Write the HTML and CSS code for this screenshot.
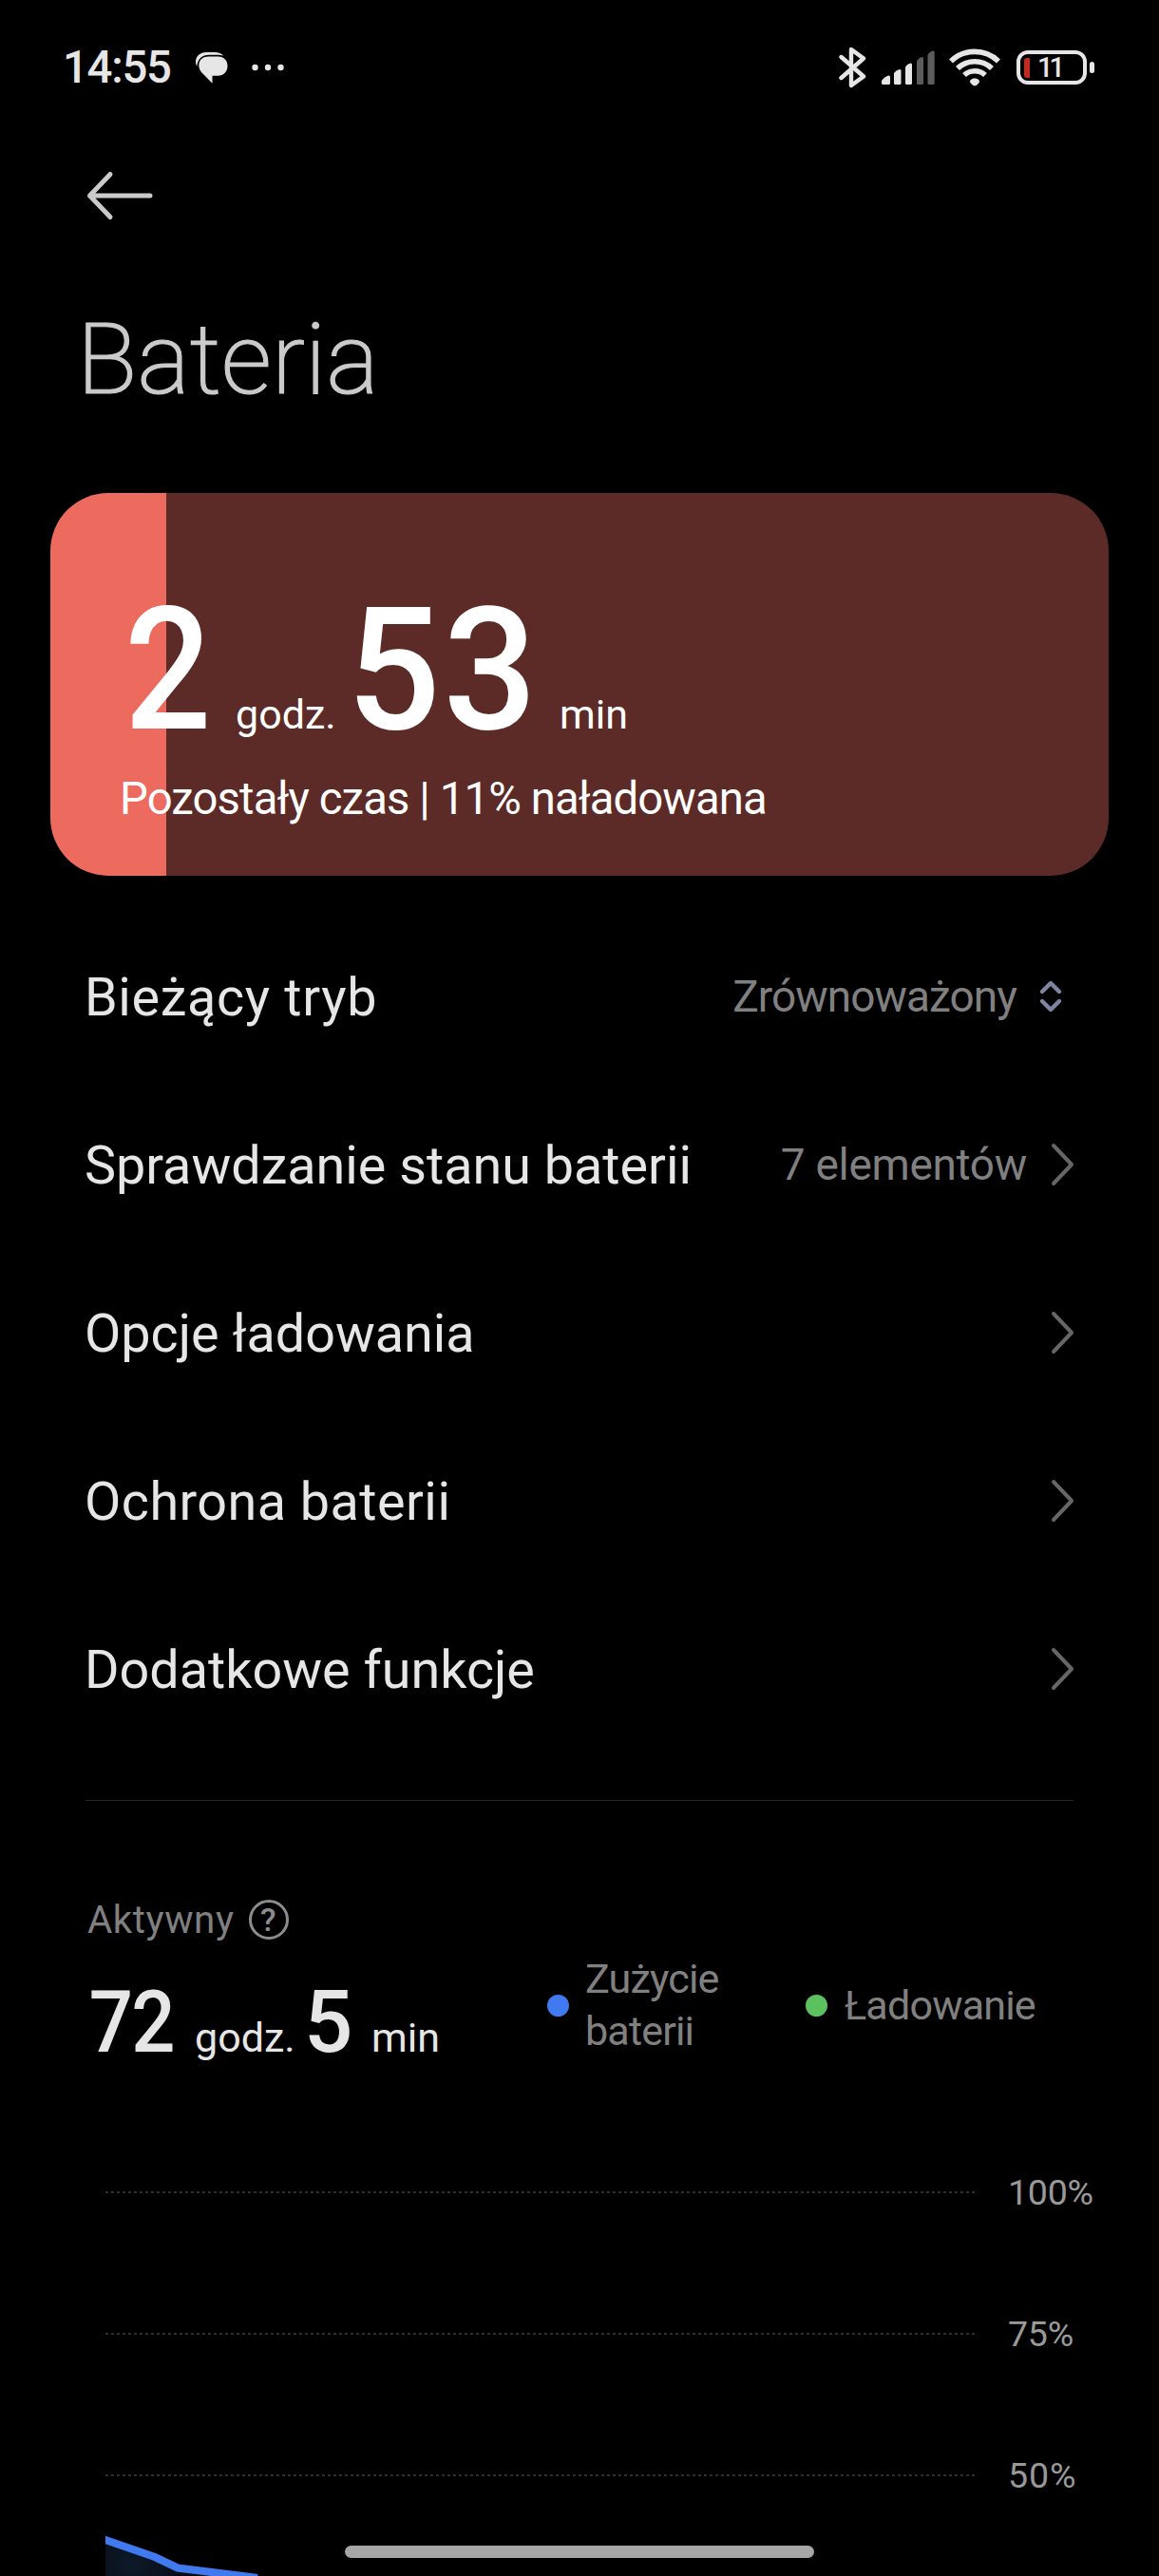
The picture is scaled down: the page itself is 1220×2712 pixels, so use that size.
FILE: index.html
```html
<!DOCTYPE html>
<html lang="pl">
<head>
  <meta charset="UTF-8">
  <meta name="viewport" content="width=device-width, initial-scale=1.0">
  <title>Bateria</title>
  <link rel="stylesheet" href="styles.css">
</head>
<body>
<div id="screen">
  <header class="status-bar">
    <div class="status-left">
      <span class="clock">14:55</span>
      <svg class="chat-icon" width="36" height="36" viewBox="0 0 36 36">
        <path d="M2.2 17C-1.5 9 4 2 12 2H21C25 2 28.5 3.6 30.3 5.8C28 5 26 4.8 23 4.8H15C8 4.8 3 9 2.2 17Z" fill="#e6e6e6"/>
        <path d="M18.5 34.7L8.5 24.6C1.5 18 3.5 6.6 14.5 6.6H24.5C31 6.6 34.5 11 34.5 16.5C34.5 22.5 30.5 26.7 24.5 26.7H18.5Z" fill="#e6e6e6"/>
      </svg>
      <svg class="more-icon" width="36" height="8" viewBox="0 0 36 8">
        <g fill="#e6e6e6"><circle cx="4.5" cy="4" r="3.2"/><circle cx="18" cy="4" r="3.2"/><circle cx="31.5" cy="4" r="3.2"/></g>
      </svg>
    </div>
    <div class="status-right">
      <svg width="32" height="48" viewBox="0 0 32 48">
        <path d="M2.5 13L26 33.5L13 43V5L26 14.5L2.5 35" fill="none" stroke="#e6e6e6" stroke-width="4.4" stroke-linecap="round" stroke-linejoin="round"/>
      </svg>
      <svg class="signal-icon" width="58" height="38" viewBox="0 0 58 38">
        <g fill="#e6e6e6">
          <path d="M0 35.5V33Q3 28.5 7.5 27.5Q9 27.5 9 29V35.5Q9 37 7.5 37H1.5Q0 37 0 35.5Z"/>
          <path d="M13 35.5V25Q15 22 19 21Q20.5 21 20.5 22.5V35.5Q20.5 37 19 37H14.5Q13 37 13 35.5Z"/>
          <path d="M25 35.5V18.5Q26.5 15.5 30.5 14.5Q32 14.3 32 16V35.5Q32 37 30.5 37H26.5Q25 37 25 35.5Z"/>
        </g>
        <g fill="#5c5c5c">
          <path d="M37 35.5V12.5Q38.5 9 42 8Q44 7.8 44 9.5V35.5Q44 37 42.5 37H38.5Q37 37 37 35.5Z"/>
          <path d="M48.5 35.5V6Q50 2.5 54 1.5Q55.7 1.3 55.7 3V35.5Q55.7 37 54.2 37H50Q48.5 37 48.5 35.5Z"/>
        </g>
      </svg>
      <svg class="wifi-icon" width="56" height="42" viewBox="0 0 56 42">
        <g fill="none" stroke="#e6e6e6" stroke-width="5.6">
          <path d="M3 14.5A36 36 0 0 1 53 14.5"/>
          <path d="M10 22A26 26 0 0 1 46 22"/>
          <path d="M17 29A16.5 16.5 0 0 1 39 29"/>
        </g>
        <path d="M28 40.5C26.5 40.5 23 37.3 23 36C23 33.8 25.5 32.5 28 32.5S33 33.8 33 36C33 37.3 29.5 40.5 28 40.5Z" fill="#e6e6e6"/>
      </svg>
      <div class="battery">
        <span class="battery-level"></span>
        <span class="battery-text">11</span>
      </div>
      <span class="battery-tip"></span>
    </div>
  </header>

  <svg class="back" width="74" height="54" viewBox="0 0 74 54">
    <path d="M68 27H4.5M26 4.5L4.5 27L26 49.5" fill="none" stroke="#cacaca" stroke-width="5" stroke-linecap="round" stroke-linejoin="round"/>
  </svg>

  <h1>Bateria</h1>

  <section class="card">
    <div class="time time-big">
      <b class="digit-first">2</b><span class="unit-h">godz.</span><b class="digit-second">53</b><span class="unit-m">min</span>
    </div>
    <p>Pozostały czas | 11% naładowana</p>
  </section>

  <ul class="menu">
    <li>
      <span class="label mode">Bieżący tryb</span>
      <span class="value">Zrównoważony</span>
      <svg class="selector" width="26" height="38" viewBox="0 0 26 38">
        <path d="M4 14L13 5L22 14M4 24L13 33L22 24" fill="none" stroke="#7f84a0" stroke-width="4.4" stroke-linecap="round" stroke-linejoin="round"/>
      </svg>
    </li>
    <li>
      <span class="label">Sprawdzanie stanu baterii</span>
      <span class="value elements">7 elementów</span>
      <svg class="arrow" width="25" height="46" viewBox="0 0 25 46"><path d="M3 3L22 23L3 43"/></svg>
    </li>
    <li>
      <span class="label">Opcje ładowania</span>
      <svg class="arrow" width="25" height="46" viewBox="0 0 25 46"><path d="M3 3L22 23L3 43"/></svg>
    </li>
    <li>
      <span class="label protection">Ochrona baterii</span>
      <svg class="arrow" width="25" height="46" viewBox="0 0 25 46"><path d="M3 3L22 23L3 43"/></svg>
    </li>
    <li>
      <span class="label">Dodatkowe funkcje</span>
      <svg class="arrow" width="25" height="46" viewBox="0 0 25 46"><path d="M3 3L22 23L3 43"/></svg>
    </li>
  </ul>

  <hr>

  <section class="usage">
    <div class="active">
      <div class="active-title">
        <span>Aktywny</span>
        <span class="help">?</span>
      </div>
      <div class="time time-small">
        <b class="digit-first">72</b><span class="unit-h">godz.</span><b class="digit-second">5</b><span class="unit-m">min</span>
      </div>
    </div>
    <div class="legend">
      <i class="dot blue"></i>
      <span class="legend-usage">Zużycie baterii</span>
      <i class="dot green"></i>
      <span>Ładowanie</span>
    </div>
  </section>

  <section class="chart">
    <div class="grid-row"><i></i><span>100%</span></div>
    <div class="grid-row"><i></i><span>75%</span></div>
    <div class="grid-row half"><i></i><span>50%</span></div>
    <svg class="curve" width="915" height="60" viewBox="0 0 915 60">
      <defs>
        <radialGradient id="glow" gradientUnits="userSpaceOnUse" cx="28" cy="48" r="80">
          <stop offset="0" stop-color="#0e1a29"/>
          <stop offset="1" stop-color="#03060b"/>
        </radialGradient>
      </defs>
      <path d="M0 21L52 39L76 51L160 61H0Z" fill="url(#glow)"/>
      <path d="M-8 18.2L52 39L76 50.5L160 61" fill="none" stroke="#4179ee" stroke-width="8.2"/>
    </svg>
  </section>

  <div class="home-bar"></div>
</div>
</body>
</html>
```
FILE: styles.css
```css
* {
  box-sizing: border-box;
}
body {
  margin: 0;
  background-color: #000;
  color: #e6e6e6;
  font-family: Roboto, "Liberation Sans", sans-serif;
}
#screen {
  position: relative;
  width: 1220px;
  height: 2712px;
  overflow: hidden;
}
.status-bar {
  display: flex;
  justify-content: space-between;
  height: 142px;
  padding: 0 68px 0 66px;
}
.status-left,
.status-right {
  display: flex;
  align-items: center;
  height: 142px;
}
.clock {
  width: 139px;
  font-size: 47.3px;
  font-weight: 500;
  letter-spacing: -1.28px;
  white-space: nowrap;
}
.more-icon {
  margin-left: 23px;
}
.status-right svg {
  flex: none;
}
.signal-icon {
  margin-left: 13px;
}
.wifi-icon {
  margin-left: 12px;
}
.battery {
  display: flex;
  align-items: center;
  width: 74px;
  height: 36px;
  margin-left: 16px;
  padding-left: 4px;
  border: 4px solid #e6e6e6;
  border-radius: 12px;
}
.battery-level {
  width: 6px;
  height: 21px;
  border-radius: 3px 1px 1px 3px;
  background-color: #c22a20;
}
.battery-text {
  margin-left: 8px;
  font-size: 29px;
  font-weight: 500;
  line-height: 28px;
  letter-spacing: -4px;
}
.battery-tip {
  width: 5px;
  height: 12px;
  margin-left: 3px;
  border-radius: 3px;
  background-color: #e6e6e6;
}
.back {
  display: block;
  margin: 37px 0 0 90px;
}
h1 {
  margin: 85px 0 0 81px;
  font-size: 104.3px;
  font-weight: 200;
  line-height: 120px;
  color: #cacaca;
  -webkit-text-stroke: 1.2px #cacaca;
}
.card {
  width: 1114px;
  height: 403px;
  margin: 81px 0 0 53px;
  padding-top: 96px;
  border-radius: 61px;
  background: linear-gradient(to right, #ed6a5e 122.5px, #5c2a27 122.5px);
  color: #fff;
}
.card p {
  margin: 16px 0 0 73px;
  font-size: 47.3px;
  line-height: 60px;
  letter-spacing: -0.9px;
}
.time {
  display: flex;
  align-items: baseline;
  white-space: nowrap;
}
.time b {
  font-weight: 500;
  transform-origin: left;
}
.time span {
  font-size: 43px;
}
.time-big {
  height: 180px;
  line-height: 180px;
  padding-left: 78px;
}
.time-big b {
  font-size: 180.9px;
}
.time-big .digit-first {
  width: 117px;
  transform: scaleX(0.89);
}
.time-big .unit-h {
  width: 117px;
}
.time-big .digit-second {
  width: 224px;
  letter-spacing: 3px;
  transform: scaleX(0.96);
}
.menu {
  margin: 38px 0 0;
  padding: 0 89px;
  list-style: none;
}
.menu li {
  display: flex;
  align-items: center;
  height: 177px;
}
.label {
  flex: 1;
  padding-top: 3px;
  font-size: 55.7px;
}
.mode {
  letter-spacing: 0.66px;
}
.protection {
  letter-spacing: 0.47px;
}
.value {
  padding-top: 1px;
  font-size: 45.9px;
  letter-spacing: -0.93px;
  color: #808080;
}
.elements {
  letter-spacing: -0.27px;
}
.selector {
  margin: 0 12px 0 23px;
}
.arrow {
  margin-left: 25px;
  fill: none;
  stroke: #666;
  stroke-width: 4;
  stroke-linecap: round;
  stroke-linejoin: round;
}
hr {
  height: 1px;
  margin: 50px 90px 0;
  border: 0;
  background-color: #262626;
}
.usage {
  display: flex;
  height: 337px;
}
.active {
  width: 576px;
  padding: 100px 0 0 92px;
}
.active-title {
  display: flex;
  align-items: center;
  height: 50px;
  font-size: 40.3px;
  letter-spacing: 0.57px;
  color: #808080;
}
.help {
  width: 42px;
  height: 42px;
  margin-left: 15px;
  border: 3.5px solid #8c8c8c;
  border-radius: 50%;
  color: #8c8c8c;
  font-size: 34px;
  font-weight: 500;
  line-height: 36px;
  text-align: center;
}
.time-small {
  height: 100px;
  margin-top: 33px;
  line-height: 100px;
}
.time-small b {
  font-size: 90.4px;
}
.time-small .digit-first {
  width: 113px;
  padding-left: 2px;
  letter-spacing: -2px;
  transform: scaleX(0.9);
}
.time-small .unit-h {
  width: 115px;
}
.time-small .digit-second {
  width: 71px;
}
.legend {
  display: flex;
  align-items: center;
  height: 110px;
  margin-top: 160px;
  font-size: 43.1px;
  line-height: 55px;
  letter-spacing: -0.85px;
  color: #808080;
}
.dot {
  flex: none;
  width: 23px;
  height: 23px;
  border-radius: 50%;
}
.blue {
  background-color: #4179ee;
}
.green {
  margin-right: 18px;
  background-color: #5cc25f;
}
.legend-usage {
  flex: none;
  width: 249px;
  padding: 0 60px 0 17px;
}
.chart {
  position: relative;
}
.grid-row {
  display: flex;
  align-items: center;
  height: 149px;
  padding-left: 111px;
  font-size: 37.6px;
  letter-spacing: -0.3px;
  color: #999;
}
.half {
  letter-spacing: 0.9px;
}
.grid-row i {
  width: 915px;
  height: 2px;
  margin-right: 35px;
  background: repeating-linear-gradient(to right, #2e2e2e 0 3px, transparent 3px 6px);
}
/* battery level line, continues under the fold */
.curve {
  position: absolute;
  top: 420px;
  left: 111px;
}
.home-bar {
  position: absolute;
  bottom: 19px;
  left: 363px;
  width: 494px;
  height: 13px;
  border-radius: 7px;
  background-color: #a6a6a6;
}
```
